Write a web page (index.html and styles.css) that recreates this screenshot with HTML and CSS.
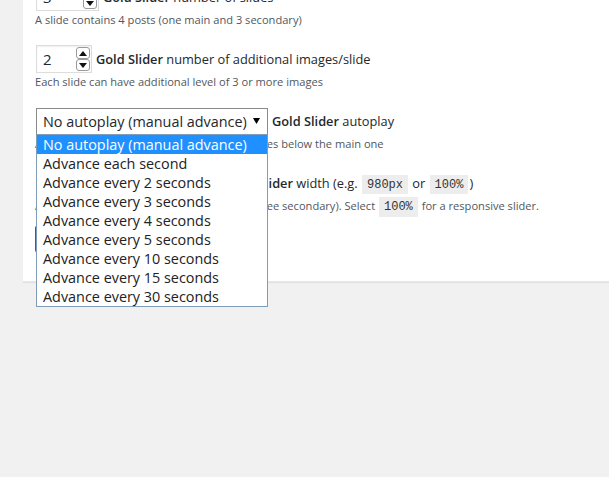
FILE: index.html
```html
<!DOCTYPE html>
<html>
<head>
<meta charset="utf-8">
<link rel="stylesheet" href="styles.css">
</head>
<body>
<div class="page">
  <div class="card">
    <div class="row">
      <div class="field">
        <div class="num num-wide"><span class="val">3</span>
          <span class="spin"><span class="sb"><svg viewBox="0 0 8 5" width="8" height="5"><path d="M0 0h8L4 5z"/></svg></span><span class="sb"><svg viewBox="0 0 8 5" width="8" height="5"><path d="M0 0h8L4 5z"/></svg></span></span>
        </div>
        <span class="label"><b>Gold Slider</b> number of slides</span>
      </div>
      <p class="desc">A slide contains 4 posts (one main and 3 secondary)</p>
    </div>

    <div class="row">
      <div class="field">
        <div class="num"><span class="val">2</span>
          <span class="spin"><span class="sb"><svg viewBox="0 0 8 5" width="8" height="5"><path d="M0 5h8L4 0z"/></svg></span><span class="sb"><svg viewBox="0 0 8 5" width="8" height="5"><path d="M0 0h8L4 5z"/></svg></span></span>
        </div>
        <span class="label"><b>Gold Slider</b> number of additional images/slide</span>
      </div>
      <p class="desc">Each slide can have additional level of 3 or more images</p>
    </div>

    <div class="row">
      <div class="field">
        <div class="select">
          <span class="sel-text">No autoplay (manual advance)</span>
          <svg class="sel-arrow" viewBox="0 0 7 6" width="7" height="6"><path d="M0 0h7L3.5 6z"/></svg>
          <ul class="options">
            <li class="on">No autoplay (manual advance)</li>
            <li>Advance each second</li>
            <li>Advance every 2 seconds</li>
            <li>Advance every 3 seconds</li>
            <li>Advance every 4 seconds</li>
            <li>Advance every 5 seconds</li>
            <li>Advance every 10 seconds</li>
            <li>Advance every 15 seconds</li>
            <li>Advance every 30 seconds</li>
          </ul>
        </div>
        <span class="label"><b>Gold Slider</b> autoplay</span>
      </div>
      <p class="desc">Autoplay moves the main slide, and the images below the main one</p>
    </div>

    <div class="row row-last">
      <div class="field">
        <div class="text-in"></div>
        <span class="label"><b>Gold Slider</b> width (e.g. <code>980px</code> or <code>100%</code>)</span>
      </div>
      <p class="desc">A slide is built of five posts (one main and three secondary). Select <code>100%</code> for a responsive slider.</p>
    </div>

    <div class="submit"><span class="btn">Save Changes</span></div>
  </div>
</div>
</body>
</html>
```

FILE: styles.css
```css
html, body {
  margin: 0;
  padding: 0;
  background: #f1f1f1;
  height: 100%;
  overflow: hidden;
}
body {
  font-family: "Open Sans", "Liberation Sans", sans-serif;
  color: #23282d;
}
.page {
  padding-left: 23px;
}
.card {
  background: #fff;
  margin-top: -30px;
  padding: 13px 0 28px 12px;
  box-shadow: 0 1px 1px rgba(0, 0, 0, 0.06);
  border-bottom: 1px solid #e6e6e6;
}
.row {
  margin-bottom: 17px;
}
.row-last {
  margin-bottom: 10px;
}
.field {
  display: flex;
  align-items: center;
  gap: 4px;
  height: 28px;
  margin-left: 1px;
}
.label {
  font-size: 12.8px;
  white-space: nowrap;
}
.label b {
  font-weight: 600;
}
.desc {
  margin: 1px 0 0;
  font-size: 11.1px;
  line-height: 16px;
  color: #50575e;
  white-space: nowrap;
}
.num {
  box-sizing: border-box;
  width: 56px;
  height: 28px;
  border: 1px solid #ddd;
  box-shadow: inset 0 1px 2px rgba(0, 0, 0, 0.07);
  display: flex;
  align-items: center;
  justify-content: space-between;
  padding: 0 1px 0 6px;
}
.num-wide {
  width: 63px;
}
.val {
  font-size: 15px;
}
.spin {
  display: flex;
  flex-direction: column;
}
.sb {
  box-sizing: border-box;
  width: 14px;
  height: 12px;
  border: 1px solid #9a9a9a;
  border-radius: 3px;
  display: flex;
  align-items: center;
  justify-content: center;
  background: #fff;
}
.sb svg {
  fill: #111;
}
.select {
  position: relative;
  box-sizing: border-box;
  width: 232px;
  height: 27px;
  border: 1px solid #8a8a8a;
  display: flex;
  align-items: center;
  justify-content: space-between;
  padding: 0 7px 0 6px;
  background: #fff;
}
.sel-text {
  font-size: 14.4px;
  white-space: nowrap;
}
.sel-arrow {
  fill: #000;
}
.options {
  position: absolute;
  left: -1px;
  top: 25px;
  width: 232px;
  box-sizing: border-box;
  margin: 0;
  padding: 0;
  list-style: none;
  background: #fff;
  border: 1px solid #7f9db9;
  z-index: 5;
}
.options li {
  height: 19px;
  line-height: 19px;
  font-size: 14.4px;
  padding-left: 6px;
  white-space: nowrap;
  color: #222;
}
.options li.on {
  background: #1e90ff;
  color: #fff;
}
.text-in {
  box-sizing: border-box;
  width: 186px;
  height: 28px;
  border: 1px solid #ddd;
}
code {
  font-family: "Liberation Mono", "DejaVu Sans Mono", monospace;
  font-size: 12px;
  background: rgba(0, 0, 0, 0.07);
  padding: 3px 5px 2px;
  margin: 0 1px;
  color: #333;
}
.desc code {
  padding: 3px 5px;
}
.submit {
  display: flex;
}
.btn {
  box-sizing: border-box;
  height: 28px;
  line-height: 26px;
  padding: 0 10px;
  background: #0085ba;
  border: 1px solid #0073aa;
  border-radius: 3px;
  color: #fff;
  font-size: 13px;
}
```
